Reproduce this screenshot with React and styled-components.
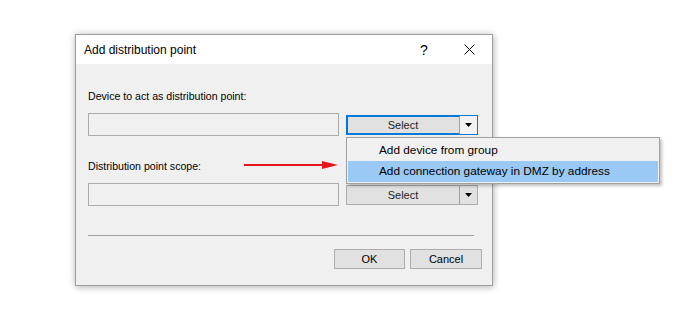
import React from 'react';
import styled, { createGlobalStyle } from 'styled-components';

const GlobalStyle = createGlobalStyle`
  html, body {
    margin: 0;
    padding: 0;
    background: #ffffff;
  }
  body {
    font-family: "Liberation Sans", Arial, sans-serif;
    color: #000;
  }
`;

const Page = styled.div`
  width: 700px;
  height: 311px;
  padding: 34px 0 0 75px;
  box-sizing: border-box;
`;

const Dialog = styled.div`
  width: 418px;
  height: 252px;
  box-sizing: border-box;
  border: 1px solid #9c9c9c;
  background: #f0f0f0;
  box-shadow: 0 0 8px rgba(0, 0, 0, 0.18), 1px 2px 6px rgba(0, 0, 0, 0.15);
  display: flex;
  flex-direction: column;
`;

const TitleBar = styled.div`
  height: 29px;
  background: #ffffff;
  display: flex;
  align-items: center;
  padding-left: 8px;
  font-size: 12px;
`;

const TitleText = styled.span`
  flex: 1;
`;

const TitleButton = styled.div`
  width: ${p => p.$w}px;
  height: 29px;
  display: flex;
  align-items: center;
  justify-content: center;
  font-size: 14px;
`;

const Body = styled.div`
  flex: 1;
  padding: 24px 13px 0 12px;
  display: flex;
  flex-direction: column;
`;

const LabelRow = styled.div`
  position: relative;
  height: 15px;
  display: flex;
  align-items: center;
  font-size: 10.6px;
  margin-top: ${p => p.$top || 0}px;
`;

const Arrow = styled.svg`
  position: absolute;
  left: 156px;
  top: 2px;
`;

const FieldRow = styled.div`
  display: flex;
  align-items: center;
  gap: 7px;
  margin-top: 10px;
`;

const Field = styled.div`
  width: 251px;
  height: 23px;
  box-sizing: border-box;
  border: 1px solid #acacac;
  background: #f0f0f0;
`;

const SplitWrap = styled.div`
  position: relative;
`;

const SplitButton = styled.div`
  width: 132px;
  height: 20px;
  box-sizing: border-box;
  border: 1px solid ${p => (p.$focused ? '#0078d7' : '#adadad')};
  box-shadow: ${p => (p.$focused ? 'inset 0 0 0 1px #0078d7' : 'none')};
  background: #e1e1e1;
  display: flex;
  font-size: 11px;
`;

const SplitMain = styled.div`
  flex: 1;
  display: flex;
  align-items: center;
  justify-content: center;
  color: #1e1e1e;
`;

const SplitArrow = styled.div`
  width: 17px;
  border-left: 1px solid #a0a0a0;
  background: ${p => (p.$focused ? '#f2f2f2' : '#e1e1e1')};
  display: flex;
  align-items: center;
  justify-content: center;
`;

const Menu = styled.div`
  position: absolute;
  left: 0;
  top: 22px;
  width: 314px;
  box-sizing: border-box;
  border: 1px solid #a0a0a0;
  background: #f0f0f0;
  padding: 2px 1px 1px;
  box-shadow: 2px 2px 3px rgba(0, 0, 0, 0.25);
  z-index: 2;
  font-size: 11.8px;
`;

const MenuItem = styled.div`
  height: 21px;
  display: flex;
  align-items: center;
  padding-left: 31px;
  background: ${p => (p.$active ? '#99c9f4' : 'transparent')};
  color: #000;
`;

const Separator = styled.div`
  height: 1px;
  width: 386px;
  background: #a0a0a0;
  margin-top: 29px;
`;

const Footer = styled.div`
  display: flex;
  justify-content: flex-end;
  gap: 5px;
  margin-top: 13px;
  margin-right: -3px;
`;

const Button = styled.div`
  width: ${p => p.$w}px;
  height: 20px;
  box-sizing: border-box;
  border: 1px solid #adadad;
  background: #e1e1e1;
  display: flex;
  align-items: center;
  justify-content: center;
  font-size: 11px;
`;

const DownTriangle = () => (
  <svg width="7" height="4" viewBox="0 0 7 4">
    <path d="M0 0 H7 L3.5 4 Z" fill="#000" />
  </svg>
);

const CloseIcon = () => (
  <svg width="11" height="11" viewBox="0 0 11 11">
    <path d="M0.5 0.5 L10.5 10.5 M10.5 0.5 L0.5 10.5" stroke="#000" strokeWidth="1" fill="none" />
  </svg>
);

const Select = ({ focused }) => (
  <SplitButton $focused={focused}>
    <SplitMain>Select</SplitMain>
    <SplitArrow $focused={focused}>
      <DownTriangle />
    </SplitArrow>
  </SplitButton>
);

const App = () => {
  return (
    <>
      <GlobalStyle />
      <Page>
        <Dialog>
          <TitleBar>
            <TitleText>Add distribution point</TitleText>
            <TitleButton $w={44}>?</TitleButton>
            <TitleButton $w={46}>
              <CloseIcon />
            </TitleButton>
          </TitleBar>
          <Body>
            <LabelRow>Device to act as distribution point:</LabelRow>
            <FieldRow>
              <Field />
              <SplitWrap>
                <Select focused />
                <Menu>
                  <MenuItem>Add device from group</MenuItem>
                  <MenuItem $active>Add connection gateway in DMZ by address</MenuItem>
                </Menu>
              </SplitWrap>
            </FieldRow>
            <LabelRow $top={22}>
              Distribution point scope:
              <Arrow width="95" height="10" viewBox="0 0 95 10">
                <path d="M0 5 H80" stroke="#e8141b" strokeWidth="2" />
                <path d="M78 1 L94 5 L78 9 Z" fill="#e8141b" />
              </Arrow>
            </LabelRow>
            <FieldRow>
              <Field />
              <Select />
            </FieldRow>
            <Separator />
            <Footer>
              <Button $w={71}>OK</Button>
              <Button $w={72}>Cancel</Button>
            </Footer>
          </Body>
        </Dialog>
      </Page>
    </>
  );
};

export default App;
